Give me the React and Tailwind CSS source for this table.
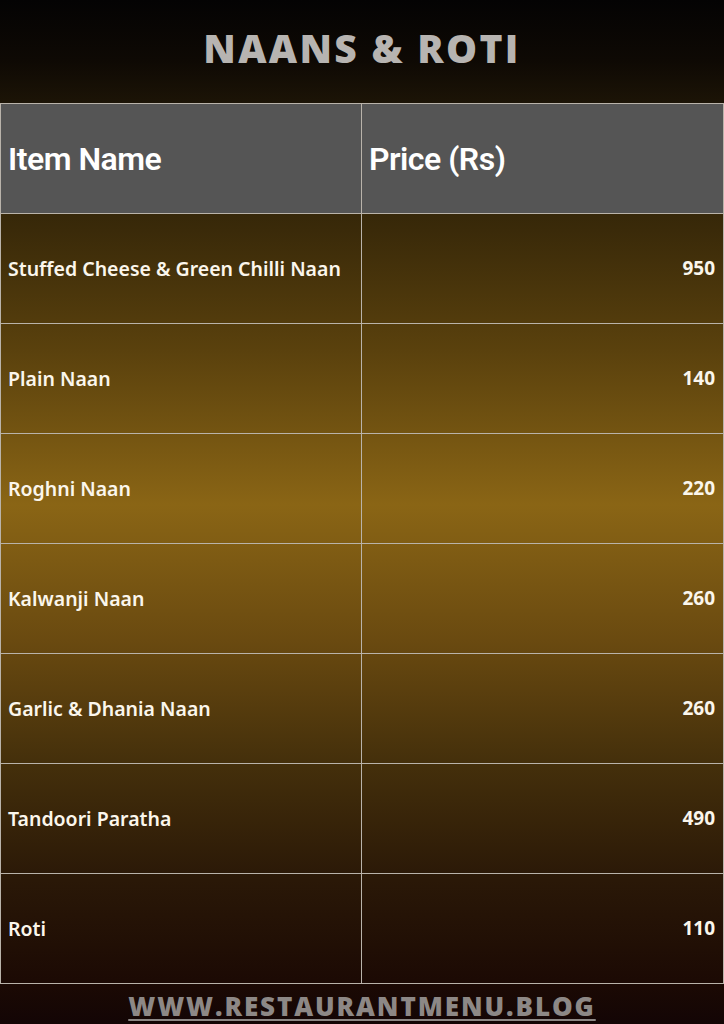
import React from 'react';

const ITEMS = [
  { name: 'Stuffed Cheese & Green Chilli Naan', price: '950' },
  { name: 'Plain Naan', price: '140' },
  { name: 'Roghni Naan', price: '220' },
  { name: 'Kalwanji Naan', price: '260' },
  { name: 'Garlic & Dhania Naan', price: '260' },
  { name: 'Tandoori Paratha', price: '490' },
  { name: 'Roti', price: '110' },
];

const App = () => {
  return (
    <div className="w-[724px] h-[1024px] overflow-hidden flex flex-col bg-[linear-gradient(180deg,#040303_0px,#0e0904_60px,#1c1406_103px,#3a2a09_230px,#5a410d_350px,#8a6515_505px,#6a4a10_640px,#45300b_760px,#2a1807_880px,#1c0a04_980px,#130505_1024px)]">
      <div className="h-[103px] flex items-center justify-center pb-2">
        <h1 className="text-[39px] font-extrabold tracking-[2.3px] text-[#b7b4b1] font-['Open_Sans',sans-serif] leading-none">
          NAANS &amp; ROTI
        </h1>
      </div>

      <div className="border-t border-l border-r border-[#b9b3aa]">
        <div className="grid grid-cols-[361px_1fr] h-[110px] bg-[#555555] border-b border-[#b9b3aa]">
          <div className="border-r border-[#b9b3aa] flex items-center pl-[7px]">
            <span className="text-[32px] font-semibold text-white font-['Roboto',sans-serif] tracking-[-0.5px]">Item Name</span>
          </div>
          <div className="flex items-center pl-[7px]">
            <span className="text-[32px] font-semibold text-white font-['Roboto',sans-serif] tracking-[-0.5px]">Price (Rs)</span>
          </div>
        </div>

        {ITEMS.map(item => (
          <div key={item.name} className="grid grid-cols-[361px_1fr] h-[110px] border-b border-[#b9b3aa]">
            <div className="border-r border-[#b9b3aa] flex items-center pl-[7px]">
              <span className="text-[19.5px] font-semibold text-[#fbf6ec] font-['Noto_Sans',sans-serif]">{item.name}</span>
            </div>
            <div className="flex items-center justify-end pr-2">
              <span className="text-[19px] font-bold text-[#fbf6ec] font-['Open_Sans',sans-serif]">{item.price}</span>
            </div>
          </div>
        ))}
      </div>

      <div className="flex-1 flex items-center justify-center pt-1">
        <span className="text-[26px] font-extrabold tracking-[1.9px] text-[#8d8886] underline underline-offset-[3px] decoration-2 font-['Open_Sans',sans-serif] leading-none">
          WWW.RESTAURANTMENU.BLOG
        </span>
      </div>
    </div>
  );
};

export default App;
